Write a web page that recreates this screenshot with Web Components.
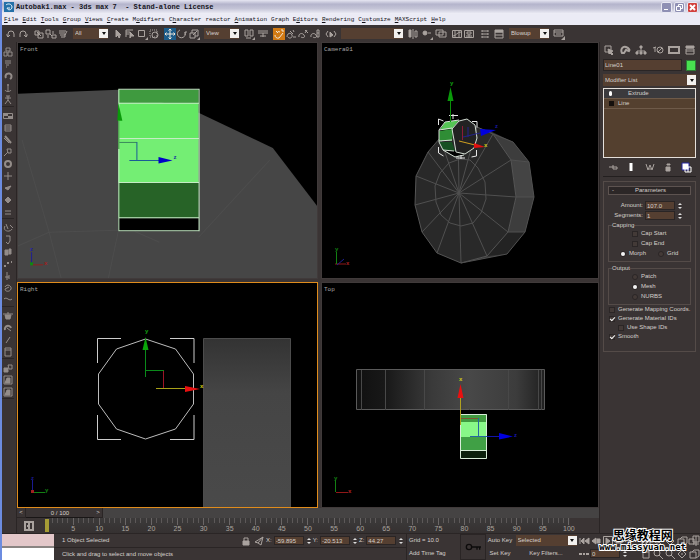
<!DOCTYPE html>
<html lang="en">
<head>
<meta charset="utf-8">
<title>Autobak1.max - 3ds max 7 - Stand-alone License</title>
<style>
  body {
    margin: 0;
    background: #3a3434;
    color: #d6d0cc;
    font: 6px/9px "Liberation Sans", sans-serif;
    --panel: #3a3434;
    --field: #553f31;
    --line: #2a2525;
  }
</style>
</head>
<body>
<max-app>
  <max-viewport label="Front">
    <svg viewBox="19 43 298 235" preserveAspectRatio="xMidYMid slice">
      <path fill="#464646" d="M0 95 18 94 119 90 199 113 273 148 318 207V290H0z"/>
      <path fill="none" stroke="#4d4d4d" d="M23 140 50 232 119 230M50 232 18 246M50 232 62 278M119 231 109 278M199 237 270 160M135 231 160 242"/>
      <path fill="#3f9a3f" d="M119 90h80v13h-80z"/>
      <path fill="#63e863" d="M119 103h80v36h-80z"/>
      <path fill="#74ee74" d="M119 139h80v44h-80z"/>
      <path fill="#276327" d="M119 183h80v35h-80z"/>
      <path d="M119 218h80v13h-80z"/>
      <path fill="none" stroke="#c5ecc5" d="M119.500 89.500h80v141h-80zM120 103.500h79M120 138.500h79M120 182.500h79M120 217.500h79"/>
      <path fill="none" stroke="#3a8a5c" d="M120 142.500h17.500"/>
      <path fill="none" stroke="#1a5c96" d="M137.500 142v18M130 160.500h30"/>
      <path fill="none" stroke="#2e8a2e" d="M119.500 121v28"/>
      <path fill="#0a9a0a" d="m119 103 4 18h-5z"/>
      <path fill="#0000c8" d="m159 157 14 3.500-14 3z"/>
      <text x="174" y="159" fill="#1a35a0">z</text>
      <path fill="none" stroke="#202090" d="M32.500 263V252"/><path fill="none" stroke="#902020" d="M33 264.500h11"/>
      <text x="31" y="251" fill="#2222a0">z</text><text x="45" y="265" fill="#a02020">x</text>
      <path fill="#108810" d="M31 262h3v3h-3z"/>
    </svg>
  </max-viewport>
  <max-viewport label="Camera01">
    <svg viewBox="322 43 276 235" preserveAspectRatio="xMidYMid slice">
      <path fill="#373737" d="M477 127 492 132 513 142 529 162 534 197 525 232 507 254 461 263 487 256 508 232 516 197 511 160z"/>
      <path fill="#444" d="M511 160 529 162 534 197 516 197z"/>
      <path fill="#3d3d3d" d="M493 134 513 142 529 162 511 160zM516 197 534 197 525 232 508 232z"/>
      <path fill="#232323" d="M508 232 525 232 507 254 487 256z"/>
      <path fill="#292929" stroke="#555" d="M440 138 428 152 416 176 415 205 422 232 437 253 461 263 487 256 508 232 516 197 511 160 493 134 477 127 458 126z"/>
      <path fill="none" stroke="#505050" d="M459 193 458 126M459 193 428 152M459 193 416 176M459 193 415 205M459 193 422 232M459 193 437 253M459 193 461 263M459 193 487 256M459 193 508 232M459 193 516 197M459 193 511 160M459 193 493 134M459 193 477 127M459 193 440 138"/>
      <path fill="none" stroke="#505050" d="M460 159 449 163 440 173 435 186 436 202 441 215 450 223 461 226 473 223 481 213 486 199 485 182 478 168 470 160zM511 160 529 162 534 197 525 232 507 254 461 263M493 134 513 142 529 162M516 197h18M508 232h17"/>
      <path fill="#222" d="m452 129 7-8 8-2 8 6 2 13-3 10-9 6-9-2-2-12z"/>
      <path fill="#55c555" d="m440 130 5-8 14-2-7 9z"/>
      <path fill="#2f8d35" d="m439 131 14-2-1 12-13 0z"/>
      <path fill="#175022" d="M439 142h13l3 9-12-1z"/>
      <path d="m443 150 13 1 8 4-10 1z"/>
      <path fill="none" stroke="#d4ded4" d="m452 129 7-8 8-2 8 6 2 13-3 10-9 6-9-2-2-12zM439 130 445 122 459 120M439 130v12l4 8 12 7 9-2M439 130l13-2M439 141l13-1M443 150l11 1"/>
      <path fill="none" stroke="#e6e6e6" d="M438.500 125v-6l5 2M438.500 147v6l5 3M472 121.500h5v6M476.500 150v6l-5 1M449 115.500h9M453 114v5M456 158h9M461 155v4"/>
      <path fill="none" stroke="#0a900a" d="M450.500 122v-22"/>
      <path fill="#0a9a0a" d="m450.500 87 3 14h-6z"/>
      <path fill="none" stroke="#8c1c38" d="M462.500 126v14"/>
      <path fill="none" stroke="#23238a" d="M463 137 480 133M468 127v10"/>
      <path fill="#0000dc" d="m480 129 16 1-15 6z"/>
      <path fill="none" stroke="#d0a020" d="m459 141 16 4"/>
      <path fill="#e01010" d="m474 143 11 4-11 1z"/>
      <text x="450" y="85" fill="#12a012">y</text><text x="484" y="147" fill="#c8c818">x</text><text x="495" y="128" fill="#1818a0">z</text>
      <path fill="none" stroke="#901818" d="M335 264h11"/><path fill="none" stroke="#202090" d="m337 265 7-6"/><path fill="none" stroke="#138013" d="M336.500 264v-12"/>
      <text x="335" y="251" fill="#138013">y</text><text x="346" y="265" fill="#a02020">x</text>
    </svg>
  </max-viewport>
  <max-viewport label="Right" active>
    <svg viewBox="18 283 299 224" preserveAspectRatio="xMidYMid slice">
      <defs><linearGradient id="slab" x2="0" y2="1"><stop stop-color="#333"/><stop offset=".3" stop-color="#454545"/><stop offset="1" stop-color="#4a4a4a"/></linearGradient></defs>
      <path fill="url(#slab)" stroke="#4c4c4c" d="M203.500 338.500h87V520h-87z"/>
      <path fill="none" stroke="#bcbcbc" d="m145.500 339 30 10 18 25v30l-18 25-30 10-29-10-18-25v-30l18-25z"/>
      <path fill="none" stroke="#ccc" d="M121 338.500H97.500V363M170 338.500h24V363M97.500 415v24.500H121M194 415v24.500h-24"/>
      <path fill="none" stroke="#0a8a1a" d="M145.500 350v27M146 370.500h18"/>
      <path fill="#0aa60a" d="m145.500 337 3 13h-6z"/>
      <path fill="none" stroke="#9c1426" d="M163.500 371v18"/>
      <path fill="none" stroke="#a8a018" d="M156 388.500h30"/>
      <path fill="#e81010" d="m185 386 15 3-15 3z"/>
      <text x="145" y="333" fill="#12a012">y</text><text x="200" y="388" fill="#d0d018">x</text>
      <path fill="none" stroke="#1a1a90" d="M32.500 491v-11"/><path fill="none" stroke="#138013" d="M33 492.500h12"/>
      <text x="31" y="480" fill="#1a1a90">z</text><text x="45" y="492" fill="#138013">y</text>
      <path fill="#a02020" d="M31 490h3v3h-3z"/>
    </svg>
  </max-viewport>
  <max-viewport label="Top">
    <svg viewBox="322 283 276 224" preserveAspectRatio="xMidYMid slice">
      <defs><linearGradient id="rim"><stop stop-color="#101010"/><stop offset=".15" stop-color="#181818"/><stop offset=".4" stop-color="#3a3a3a"/><stop offset=".6" stop-color="#484848"/><stop offset=".85" stop-color="#3c3c3c"/><stop offset="1" stop-color="#202020"/></linearGradient></defs>
      <path fill="url(#rim)" stroke="#5a5a5a" d="M356.500 369.500h188v40h-188z"/>
      <path fill="none" stroke="#484848" d="M361.500 370v40M385.500 370v40M424.500 370v40M469.500 370v40M508.500 370v40M538.500 370v40M541.500 370v40"/>
      <path fill="#419b41" d="M460 414h27v8h-27z"/>
      <path fill="#88f888" d="M460 422h27v15h-27z"/>
      <path fill="#40a045" d="M460 437h27v13h-27z"/>
      <path fill="#0c200c" d="M460 450h27v9h-27z"/>
      <path fill="none" stroke="#d8ecd8" d="M460.500 414.500h26v44h-26zM461 450.500h25"/>
      <path fill="none" stroke="#7c5830" d="M461 418.500h17"/>
      <path fill="none" stroke="#2468a0" d="M478.500 418v18M470 436.500h17"/>
      <path fill="none" stroke="#1414a8" d="M487 436.500h14"/>
      <path fill="none" stroke="#b0a020" d="M460.500 397v28"/>
      <path fill="#e81010" d="m460.500 384 3 14h-6z"/>
      <path fill="#0000e0" d="m499 433 14 3.500-14 3z"/>
      <text x="459" y="381" fill="#d0d018">x</text><text x="514" y="437" fill="#1818a8">z</text>
      <path fill="none" stroke="#901818" d="M336 492.500h12"/><path fill="none" stroke="#138013" d="M335.500 492v-12"/>
      <text x="334" y="480" fill="#138013">y</text><text x="348" y="493" fill="#b02020">x</text>
    </svg>
  </max-viewport>
</max-app>

<script>
// icon strokes live on a 12 x 12 grid
const ICONS = {
  undo: '<path d="M3 9V6a3 3 0 0 1 6 0v3M1.500 6.500 3 9l2-2"/>',
  redo: '<path d="M3 9V6a3 3 0 0 1 6 0v3M7 7l2 2 1.500-2.500"/>',
  link: '<path d="M2 3h4v4H2zM5 5h5v5H5zM4 4l4 4"/>',
  unlink: '<path d="M1 2h4v4H1zM7 7h4v3H7zM5 6l2 2M8 3v3M3 7v3"/>',
  bind: '<path d="M2 3h7M2 5h6M3 7h5l2-4M4 9h4V6"/>',
  cursor: '<path fill="currentColor" d="M4 2v7l2-2 1 3 1-1-1-2h2z"/>',
  byname: '<path d="M2 2h7M2 4h4M2 6h3M2 9V2"/><path fill="currentColor" d="M6 4v6l1-2h3z"/>',
  region: '<path d="M2.500 2.500h6v6h-6z"/><path fill="currentColor" stroke="none" d="m12 9v3H9z"/>',
  crossing: '<path stroke-dasharray="1 1" d="M2 2h7v7H2z"/><circle cx="7" cy="7" r="3"/>',
  move: '<path d="M6 1v10M1 6h10M4.500 2.500 6 1l1.500 1.500M4.500 9.500 6 11l1.500-1.500M2.500 4.500 1 6l1.500 1.500M9.500 4.500 11 6 9.500 7.500"/>',
  rotate: '<path d="M4 2a4 4 0 1 0 5 2M9 7V4h2"/>',
  scale: '<path d="M2 5h5v5H2zM4 5V2h6v6H7M5 7l4-4"/><path fill="currentColor" stroke="none" d="m12 9v3H9z"/>',
  pivot: '<path d="M2 2h3v6H2zM7 2h3v6H7zM3 10h5"/><path fill="currentColor" stroke="none" d="m12 9v3H9z"/>',
  manip: '<path d="M1 3h10M1 5h10M6 5v4M3 8h6"/>',
  snap: '<path d="M2 7a3 3 0 0 0 4 3l4-5M4 5a2 2 0 0 1 3-1M8 2h2v2"/><path d="M3 3l2 2"/>',
  angle: '<path d="M2 9c0-4 4-5 5-2s-3 4-4 2M8 2l1 2M8 9h3M5 3l3 3"/>',
  percent: '<path d="M2 9c-1-3 3-5 5-2s-2 3-3 2M8 2l3 3M10 2 8 5"/>',
  spin: '<path d="M2 9c-1-3 3-5 5-2s-2 3-3 2M8 2h2v7H8zM8 5h2"/>',
  named: '<path d="M3 3 1 6l2 3M9 3l2 3-2 3"/><path fill="currentColor" d="M5 4v5l3-2z"/>',
  mirror: '<path fill="currentColor" d="M2 2h2v7H2z"/><path d="M6 1v10M8 3h2v6H8z"/>',
  align: '<circle cx="4" cy="5" r="2" fill="currentColor"/><path d="M7 5h3"/><path fill="currentColor" stroke="none" d="m12 9v3H9z"/>',
  layers: '<path d="M1 2h7v5H1zM4 4h7v5H4z"/>',
  curve: '<path d="M1.500 2.500h9v7h-9zM2 8c3 0 4-4 8-4M4 3v6M8 3v6"/>',
  schematic: '<path d="M1.500 2.500h9v7h-9zM4 4h4v2H4zM6 6v3M3 8h6"/>',
  material: '<path stroke-dasharray="2 1" d="M2 3h8M2 6h8M2 9h8M4 2v8M8 2v8"/>',
  render: '<path fill="currentColor" d="M2 2h8v2H2z"/><path d="M2 4h8v6H2zM2 7h8"/>',
  quick: '<path d="M1 2h9v6H1zM1 4h9M3 6h5"/><path fill="currentColor" stroke="none" d="m12 8v4H8z"/>',
  boxes: '<path d="M4 2h4v3H4zM2 6h3v4H2zM6 6h4v4H6z"/>',
  lines: '<path d="M3 3h6M3 5h6M4 7h3M4 9h1"/>',
  swirl: '<path stroke-width="2" d="M4 8a3 3 0 1 1 4 1"/>',
  anchor: '<path d="M6 2v7M3 8c1 2 5 2 6 0M5 3h2"/>',
  figure: '<path d="M6 2v4L3 10M6 6l3 4M3 4h6M4 2h4"/>',
  checker: '<path fill="currentColor" stroke="none" d="M1 3h5v3H1zM6 6h5v3H6z"/><path d="M1.500 3.500h9v5h-9z"/>',
  drum: '<path d="M3 3h6v6H3zM3 5h6M3 7h6"/>',
  brush: '<path stroke-width="2" d="m3 2 6 7"/><path d="m2 4 5 5"/>',
  hook: '<path d="m2 10 4-4M5 3h4v4H6z"/>',
  ring: '<circle cx="6" cy="6" r="3" stroke-width="2"/>',
  plus: '<path d="M6 2v8M2 6h8"/>',
  flag: '<path fill="currentColor" d="m3 6 6-2-3 4z"/>',
  gem: '<path fill="currentColor" d="m6 3 3 3-3 3-3-3z"/>',
  bars: '<path d="M3 5h6M3 8h6"/>',
  chain: '<path d="M3 4c-3 5 5 7 7 3M8 3l3 3M4 2l2 5"/>',
  hanger: '<path d="M4 2h4v5L6 10 4 8"/>',
  cloth: '<path fill="currentColor" d="M3 4h3v5H3zM7 3h2v5H7z"/>',
  dots: '<path stroke-width="2" d="M2 8h2M5 5h2M9 4h1"/>',
  post: '<path d="M5 2v8M7 5v4M3 7h4"/>',
  loop: '<path d="M3 5c2-4 7-1 6 2S3 10 3 7l4-2"/>',
  wave: '<path d="M2 5c3-3 5 3 8 0"/>',
  pot: '<path fill="currentColor" d="M3 5h6L8 9H4z"/><path d="M1 4h10M5 3h2"/>',
  globe: '<path stroke-width="2" d="M3 8a3 3 0 1 1 6-2"/><path d="m5 6 4 3"/>',
  slash: '<path d="m8 3-4 6"/>',
  panel: '<path d="M3 2h6v8H3zM3 4h6"/>',
  pair: '<path fill="currentColor" d="M2 6h4v4H2z"/><path d="M6 3h4v4H7z"/>',
  tile: '<path d="M2 2h8v8H2z"/><path fill="currentColor" d="M5 4h3v5H3z"/>',
  create: '<path d="M2 2h6v6H2z"/><path fill="currentColor" d="m5 5 5 2-2 1 2 2-1 1-2-2-1 1z"/>',
  modify: '<path stroke-width="2" d="M3 9C1 5 4 2 7 3s4 3 3 4L7 6 5 9z"/>',
  tree: '<path d="M6 3v4M2 9V7h8v2M6 7v2"/><path fill="currentColor" d="M5 2h2v2H5zM1 8h2v2H1zM5 8h2v2H5zM9 8h2v2H9z"/>',
  motion: '<circle cx="8" cy="6" r="3"/><path d="M6 8l4-4M1 4l3-1M3 3v5"/>',
  display: '<path stroke-width="2" d="M1 3h10v6H1z"/>',
  hammer: '<path fill="currentColor" d="M2 2h8v2H2z"/><path d="M2 5h8v5H2zM2 7h8"/>',
  pin: '<path d="M2 6h4M6 4v4h4V6H6"/>',
  result: '<path stroke-width="3" stroke="#fff" d="M6 2v8"/>',
  unique: '<path stroke-width="1" d="m2 3 2 6 2-5 2 5 2-6M5 8h2"/>',
  trash: '<path fill="currentColor" d="M4 6h4v4H4zM5 3h3v1H5z"/>',
  sets: '<path fill="#fff" stroke="#2525a0" d="M2 2h7v7H2z"/><path stroke="#fff" d="M5 6h6v5H5zM8 6v5"/>',
  trackbar: '<path stroke-width="2" d="M2 2h8v8H2zM6 2v8M4 6h2"/>',
  lock: '<path fill="currentColor" d="M3 6h6v4H3z"/><path d="M4 6V3h4v3"/>',
  plane: '<path d="m2 7 8-5-2 8-3-2zM5 8l5-6"/>',
  first: '<path d="M2 3v6"/><path fill="currentColor" d="M6 3v6L3 6zM11 3v6L7 6z"/>',
  prev: '<path fill="currentColor" d="M6 3v6L2 6zM7 4h3v4H7z"/>',
  play: '<path d="M1.500 1.500h9v9h-9z"/><path fill="currentColor" d="m4 3 4 3-4 3z"/>',
  next: '<path fill="currentColor" d="m6 3 4 3-4 3zM2 4h3v4H2z"/>',
  last: '<path d="M10 3v6"/><path fill="currentColor" d="m2 3 3 3-3 3zM6 3l3 3-3 3z"/>',
  keymode: '<path stroke-width="2" d="M1 6h3M5 6h2M8 6h3"/>',
  zoom: '<circle cx="5" cy="5" r="3"/><path d="m7 7 4 4"/>',
  cube: '<path d="M2 4h6v6H2zM4 4l2-2h5v6L8 10"/>',
  four: '<path d="M1 4h5v5H1zM5 1h6v6H5zM8 1v10M5 9h6"/>',
  orbit: '<path d="m6 2 4 4-4 4-4-4z"/><path d="M6 5v2"/>',
  key: '<circle cx="3" cy="6" r="2"/><path d="M5 6h7M9 6v2M11 6v2"/>',
};

// shared base: every part sets its markup into an open root
class Part extends HTMLElement {
  constructor() {
    super();
    this.attachShadow({ mode: "open" });
  }
  connectedCallback() {
    this.shadowRoot.innerHTML = this.template();
  }
}

class MaxIcon extends Part {
  template() {
    return `<style>
      :host { display: block; width: 12px; height: 12px; flex: none; color: #aaa39f; }
      svg { display: block; width: 100%; height: 100%; fill: none; stroke: currentColor; }
    </style><svg viewBox="0 0 12 12" aria-hidden="true">${ICONS[this.getAttribute("name")]}</svg>`;
  }
}

class MaxTool extends Part {
  template() {
    const label = this.getAttribute("name");
    return `<style>
      :host { display: block; flex: none; }
      button { display: block; border: 0; padding: 0; background: none; }
      :host([tone="blue"]) button { background: #1b5c8a; }
      :host([tone="orange"]) button { background: #d27a14; }
      :host([tone]) max-icon { color: #efe6da; }
    </style><button type="button" aria-label="${label}"><max-icon name="${label}"></max-icon></button>`;
  }
}

class MaxSelect extends Part {
  template() {
    return `<style>
      :host { display: flex; height: 11px; background: var(--field); flex: none; }
      select { flex: 1; min-width: 0; appearance: none; border: 0; border-radius: 0; padding: 0 2px; margin: 0; background: none; color: inherit; font: inherit; }
      i { flex: none; width: 9px; margin: 1px 0; background: #f2f0ee; display: grid; place-items: center; pointer-events: none; }
      i::after { content: ""; border: 2px solid transparent; border-top: 3px solid #111; border-bottom: 0; }
    </style><select aria-label="${this.getAttribute("label")}"><option>${this.getAttribute("value")}</option></select><i></i>`;
  }
}

class MaxSpinner extends Part {
  template() {
    const label = this.getAttribute("label");
    return `<style>
      :host { display: block; }
      label { display: flex; align-items: center; justify-content: flex-end; gap: 2px; }
      input { width: 30px; height: 9px; box-sizing: border-box; padding: 0 1px; border: 1px solid var(--line); background: var(--field); color: inherit; font: inherit; line-height: 7px; }
      i { display: grid; gap: 2px; width: 6px; justify-items: center; }
      i::before, i::after { content: ""; border: 2px solid transparent; }
      i::before { border-bottom-color: #ddd; border-top: 0; }
      i::after { border-top-color: #ddd; border-bottom: 0; }
    </style><label>${label}<input ${label ? "" : 'aria-label="Frame"'} value="${this.getAttribute("value")}"><i></i></label>`;
  }
}

class MaxOption extends Part {
  template() {
    const type = this.getAttribute("type");
    return `<style>
      :host { display: block; white-space: nowrap; }
      label { display: flex; align-items: center; gap: 3px; height: 9px; }
      input { appearance: none; flex: none; margin: 0; width: 6px; height: 6px; box-sizing: border-box; border: 1px solid #2b2626; background: #433a37; display: grid; place-items: center; }
      input[type=radio] { border-radius: 3px; }
      input[type=radio]:checked::after { content: ""; width: 4px; height: 4px; border-radius: 2px; background: #f4f4f4; }
      input[type=checkbox]:checked::after { content: ""; width: 4px; height: 2px; border: solid #f4f4f4; border-width: 0 0 1px 1px; transform: rotate(-45deg); }
    </style><label><input type="${type}" ${this.hasAttribute("checked") ? "checked" : ""}><slot></slot></label>`;
  }
}

class MaxTitlebar extends Part {
  template() {
    return `<style>
      :host { display: flex; align-items: center; height: 14px; padding: 0 2px; gap: 2px; background: linear-gradient(#e6e6f2, #b4b4cc 30%, #c3c3d6 60%, #f0f0f8); color: #14141c; font: bold 7px/12px "Liberation Mono", monospace; }
      svg { width: 10px; height: 10px; }
      h1 { margin: 0; flex: 1; font: inherit; white-space: pre; }
      div { display: flex; gap: 2px; }
      button { width: 11px; height: 11px; padding: 0; border: 1px solid #e8e8f2; border-radius: 2px; background: #8f90b4; }
      button svg { display: block; width: 9px; height: 9px; fill: none; stroke: #fff; }
      button.close { background: #d2403c; }
    </style>
    <svg viewBox="0 0 10 10"><path fill="#2470a8" d="M0 0h10v10H0z"/><path fill="none" stroke="#e8f4fa" d="M2 3c2-2 6-1 6 2S4 9 3 6h3"/></svg>
    <h1>Autobak1.max - 3ds max 7  - Stand-alone License</h1>
    <div>
      <button aria-label="Minimize"><svg viewBox="0 0 9 9"><path d="M2 6.500h4"/></svg></button>
      <button aria-label="Restore"><svg viewBox="0 0 9 9"><path d="M1.500 3.500h4v4h-4zM3.500 3V1.500h4v4H6"/></svg></button>
      <button class="close" aria-label="Close"><svg viewBox="0 0 9 9"><path stroke-width="2" d="m2 2 5 5M7 2 2 7"/></svg></button>
    </div>`;
  }
}

class MaxMenubar extends Part {
  template() {
    // an ampersand marks the letter to underline
    const items = ["&File", "&Edit", "&Tools", "&Group", "&Views", "&Create", "M&odifiers", "C&haracter", "reactor", "&Animation", "Graph E&ditors", "&Rendering", "C&ustomize", "&MAXScript", "&Help"];
    return `<style>
      :host { display: flex; align-items: center; gap: 4px; height: 11px; padding: 0 2px; background: #ebebf5; font: 6px/10px "Liberation Mono", monospace; }
      a { color: #101018; text-decoration: none; white-space: pre; }
    </style>${items.map(t => `<a href="#">${t.replace(/&(.)/, "<u>$1</u>")}</a>`).join("")}`;
  }
}

class MaxToolbar extends Part {
  template() {
    const tools = names => names.split(" ").map(n => `<max-tool name="${n}"></max-tool>`).join("");
    return `<style>
      :host { display: flex; align-items: center; height: 17px; padding: 0 3px; gap: 4px; background: var(--panel); }
      div { display: flex; }
      .wide { gap: 2px; }
      .short { width: 35px; }
      .long { width: 62px; }
      .render { width: 40px; }
    </style>
    <div>${tools("undo redo")}</div>
    <div>${tools("link unlink bind")}</div>
    <max-select class="short" label="Selection filter" value="All"></max-select>
    <div>${tools("cursor byname region crossing")}</div>
    <div><max-tool name="move" tone="blue"></max-tool>${tools("rotate scale")}</div>
    <max-select class="short" label="Coordinate system" value="View"></max-select>
    <div class="wide">${tools("pivot manip")}</div>
    <div><max-tool name="snap" tone="orange"></max-tool>${tools("angle percent spin")}</div>
    <div>${tools("named")}</div>
    <max-select class="long" label="Named selection" value=""></max-select>
    <div class="wide">${tools("mirror align layers")}</div>
    <div>${tools("curve schematic")}</div>
    <div class="wide">${tools("material render")}</div>
    <max-select class="render" label="Render type" value="Blowup"></max-select>
    <div>${tools("quick")}</div>`;
  }
}

class MaxSidebar extends Part {
  template() {
    const groups = [
      "boxes lines swirl anchor figure",
      "checker drum brush hook ring plus flag gem bars",
      "chain hanger cloth dots post loop wave",
      "pot globe slash panel",
      "pair tile tile",
    ];
    return `<style>
      :host { display: flex; flex-direction: column; align-items: center; gap: 3px; padding: 4px 2px 0 0; border-right: 1px solid var(--line); }
      div { border-bottom: 1px solid var(--line); }
      max-tool { opacity: .8; }
    </style>${groups.map(g => `<div>${g.split(" ").map(n => `<max-tool name="${n}"></max-tool>`).join("")}</div>`).join("")}`;
  }
}

class MaxViewport extends Part {
  template() {
    return `<style>
      :host { display: grid; grid: minmax(0, 1fr) / minmax(0, 1fr); contain: size; min-height: 160px; overflow: hidden; border: 1px solid #403a3a; background: #000; }
      :host([active]) { border-color: #e08c1c; }
      span { grid-area: 1 / 1; padding: 3px 2px; z-index: 1; color: #a8a8a8; font: 6px/7px "Liberation Mono", monospace; }
      ::slotted(svg) { grid-area: 1 / 1; width: 100%; height: 100%; font: bold 6px "Liberation Sans", sans-serif; }
    </style><span>${this.getAttribute("label")}</span><slot></slot>`;
  }
}

class MaxTimeline extends Part {
  template() {
    let ticks = "";
    for (let f = 0; f <= 100; f++) {
      ticks += `<i class="${f % 5 ? "" : "major"}">${f % 5 || !f ? "" : `<b>${f}</b>`}</i>`;
    }
    return `<style>
      :host { display: block; }
      .slider { display: flex; height: 10px; background: #454343; }
      .slider div { display: flex; width: 86px; background: var(--panel); }
      button { border: 1px solid var(--line); border-width: 0 1px 1px 0; padding: 0; width: 9px; background: none; color: inherit; font: inherit; }
      output { flex: 1; text-align: center; line-height: 10px; border-bottom: 1px solid #191616; }
      .track { display: flex; align-items: center; height: 15px; padding: 0 29px 0 6px; }
      .track max-tool { margin-right: 12px; }
      .ticks { flex: 1; align-self: stretch; display: flex; justify-content: space-between; background: linear-gradient(#3c3a3a, #353131); }
      .ticks i { display: flex; flex-direction: column; align-items: center; width: 0; font-style: normal; }
      .ticks i::before { content: ""; width: 1px; height: 5px; flex: none; background: #5c5858; }
      .ticks i.major::before { height: 7px; background: #6a6666; }
      .ticks i:first-child::before { width: 4px; height: 13px; margin-top: 1px; background: #a69c35; }
      b { font-weight: normal; font-size: 7px; line-height: 7px; color: #aaa49f; }
    </style>
    <div class="slider"><div><button aria-label="Previous frame">&lt;</button><output>0 / 100</output><button aria-label="Next frame">&gt;</button></div></div>
    <div class="track"><max-tool name="trackbar"></max-tool><div class="ticks">${ticks}</div></div>`;
  }
}

class MaxRollout extends Part {
  template() {
    return `<style>
      :host { display: block; padding: 4px; border: 1px solid #544b48; }
      button { display: flex; width: 100%; height: 9px; padding: 0 3px; border: 1px solid #5d5350; background: #2c2727; color: inherit; font: inherit; line-height: 7px; }
      b { flex: 1; font-weight: normal; text-align: center; }
    </style><button type="button"><span>-</span><b>${this.getAttribute("heading")}</b></button><slot></slot>`;
  }
}

class MaxCommandPanel extends Part {
  template() {
    return `<style>
      :host { display: block; padding: 1px 4px 0 3px; border-left: 1px solid var(--line); }
      nav, .row, .stack-tools { display: flex; align-items: center; justify-content: space-between; }
      nav { height: 14px; }
      .row { margin: 2px 0 3px; gap: 4px; }
      .row input { flex: 1; min-width: 0; height: 12px; box-sizing: border-box; border: 1px solid var(--line); padding: 0 1px; background: var(--field); color: inherit; font: inherit; }
      .swatch { width: 10px; height: 11px; padding: 0; border: 1px solid #2c7a34; background: #48e050; }
      max-select { height: 12px; }
      .stack { list-style: none; margin: 2px 0 0; padding: 0; height: 68px; border: 1px solid #e4dfda; background: #54402f; }
      .stack li { display: flex; align-items: center; height: 9px; padding: 0 5px; gap: 4px; border-bottom: 1px solid #6e5a49; }
      .stack .on { background: #3b3a3d; }
      .on span { padding-left: 12px; }
      .bulb { width: 3px; height: 5px; border-radius: 2px; background: #fff; }
      .plus { width: 5px; height: 5px; background: #15100d; }
      .stack-tools { height: 18px; padding: 0 4px; border-bottom: 1px solid #231f1f; margin-bottom: 4px; }
      .params { display: grid; gap: 1px; padding: 6px 8px 1px 0; }
      fieldset { display: grid; gap: 1px; margin: 0; padding: 0 3px 3px; border: 1px solid #544b48; min-width: 0; }
      legend { padding: 0; line-height: 8px; }
      .capping { margin: 0 0 2px; }
      .indent { padding-left: 20px; }
      .pair { display: flex; gap: 12px; padding-left: 8px; }
      .checks { padding: 0 0 6px 1px; }
      .sub { padding-left: 9px; }
    </style>
    <nav>${"create modify tree motion display hammer".split(" ").map(n => `<max-tool name="${n}"></max-tool>`).join("")}</nav>
    <div class="row"><input aria-label="Object name" value="Line01"><button class="swatch" aria-label="Object color"></button></div>
    <max-select label="Modifier" value="Modifier List"></max-select>
    <ul class="stack"><li class="on"><i class="bulb"></i><span>Extrude</span></li><li><i class="plus"></i>Line</li></ul>
    <div class="stack-tools">${"pin result unique trash sets".split(" ").map(n => `<max-tool name="${n}"></max-tool>`).join("")}</div>
    <max-rollout heading="Parameters">
      <div class="params"><max-spinner label="Amount:" value="107.0"></max-spinner><max-spinner label="Segments:" value="1"></max-spinner></div>
      <fieldset class="capping"><legend>Capping</legend>
        <max-option class="indent" type="checkbox">Cap Start</max-option>
        <max-option class="indent" type="checkbox">Cap End</max-option>
        <div class="pair"><max-option type="radio" checked>Morph</max-option><max-option type="radio">Grid</max-option></div>
      </fieldset>
      <fieldset><legend>Output</legend>
        <max-option class="indent" type="radio">Patch</max-option>
        <max-option class="indent" type="radio" checked>Mesh</max-option>
        <max-option class="indent" type="radio">NURBS</max-option>
      </fieldset>
      <div class="checks">
        <max-option type="checkbox">Generate Mapping Coords.</max-option>
        <max-option type="checkbox" checked>Generate Material IDs</max-option>
        <max-option class="sub" type="checkbox">Use Shape IDs</max-option>
        <max-option type="checkbox" checked>Smooth</max-option>
      </div>
    </max-rollout>`;
  }
}

class MaxStatus extends Part {
  template() {
    const tools = names => names.split(" ").map(n => `<max-tool name="${n}"></max-tool>`).join("");
    return `<style>
      :host { display: block; border-top: 1px solid var(--line); }
      .bar { display: grid; grid-template-columns: 52px minmax(0, 1fr) 166px 54px 26px 28px 64px 54px 68px; grid-template-rows: 13px 13px; }
      .bar > * { display: flex; align-items: center; min-width: 0; white-space: nowrap; }
      .bar > .script { grid-row: 1 / 3; display: grid; grid-template-rows: 1fr 1fr; align-items: stretch; gap: 2px; background: #8a8482; }
      .script input { min-width: 0; min-height: 0; padding: 0; border: 0; background: #fff; }
      .script .listener { background: #e3c7c9; }
      .message { padding-left: 8px; }
      .prompt { grid-area: 2 / 2 / 3 / 4; padding-left: 8px; border-top: 1px solid var(--line); box-sizing: border-box; }
      .coords { gap: 1px; }
      .grid, .tag { padding-left: 2px; border-left: 1px solid var(--line); }
      .tag { grid-area: 2 / 4; }
      .big { grid-area: 1 / 5 / 3 / 6; justify-content: center; border: 1px solid var(--line); background: none; padding: 0; }
      .big max-icon { width: 16px; height: 16px; color: #0d0b0b; }
      .key { padding: 0; border: 0; background: none; color: inherit; font: inherit; justify-content: center; }
      .set { grid-area: 2 / 6; }
      .filters { grid-area: 2 / 7; }
      max-select { width: 61px; margin: auto; }
      .frame { grid-area: 2 / 8; }
      .nav { justify-content: flex-end; }
      .nav2 { grid-area: 2 / 9; }
    </style>
    <div class="bar">
      <div class="script"><input class="listener" aria-label="Macro recorder"><input aria-label="Listener"></div>
      <div class="message">1 Object Selected</div>
      <div class="coords">${tools("lock plane")}
        <max-spinner label="X:" value="-59.895"></max-spinner><max-spinner label="Y:" value="-20.513"></max-spinner><max-spinner label="Z:" value="44.27"></max-spinner></div>
      <div class="grid">Grid = 10.0</div>
      <button class="big" aria-label="Set keys"><max-icon name="key"></max-icon></button>
      <button class="key">Auto Key</button>
      <div><max-select label="Key target" value="Selected"></max-select></div>
      <div>${tools("first prev play next")}</div>
      <div class="nav">${tools("last zoom orbit cube four")}</div>
      <div class="prompt">Click and drag to select and move objects</div>
      <div class="tag">Add Time Tag</div>
      <button class="key set">Set Key</button>
      <button class="key filters">Key Filters...</button>
      <div class="frame">${tools("keymode")}<max-spinner label="" value="0"></max-spinner></div>
      <div class="nav nav2">${tools("panel zoom zoom orbit cube")}</div>
    </div>`;
  }
}

class MaxWatermark extends Part {
  template() {
    return `<style>
      :host { position: absolute; right: 14px; bottom: 7px; display: block; text-align: center; color: #000; -webkit-text-stroke: 2px #fff; paint-order: stroke fill; }
      p { margin: 0; font: bold 12px/15px "Noto Sans CJK SC", sans-serif; }
      p + p { font: bold 9px/11px "DejaVu Sans Mono", monospace; }
    </style><p lang="zh">思缘教程网</p><p>www.missyuan.net</p>`;
  }
}

class MaxApp extends Part {
  template() {
    return `<style>
      :host { display: grid; grid-template-rows: auto auto auto 1fr auto; min-height: 100vh; position: relative; box-sizing: border-box; border-left: 2px solid #6c8ce0; }
      main { display: grid; grid-template-columns: 15px minmax(0, 1fr) 101px; }
      .work { display: grid; grid-template-rows: 1fr auto; }
      .views { display: grid; grid-template-columns: 301fr 278fr; grid-template-rows: 237fr 226fr; gap: 3px; }
    </style>
    <max-titlebar></max-titlebar>
    <max-menubar></max-menubar>
    <max-toolbar></max-toolbar>
    <main>
      <max-sidebar></max-sidebar>
      <div class="work"><div class="views"><slot></slot></div><max-timeline></max-timeline></div>
      <max-command-panel></max-command-panel>
    </main>
    <max-status></max-status>
    <max-watermark></max-watermark>`;
  }
}

customElements.define("max-icon", MaxIcon);
customElements.define("max-tool", MaxTool);
customElements.define("max-select", MaxSelect);
customElements.define("max-spinner", MaxSpinner);
customElements.define("max-option", MaxOption);
customElements.define("max-titlebar", MaxTitlebar);
customElements.define("max-menubar", MaxMenubar);
customElements.define("max-toolbar", MaxToolbar);
customElements.define("max-sidebar", MaxSidebar);
customElements.define("max-viewport", MaxViewport);
customElements.define("max-timeline", MaxTimeline);
customElements.define("max-rollout", MaxRollout);
customElements.define("max-command-panel", MaxCommandPanel);
customElements.define("max-status", MaxStatus);
customElements.define("max-watermark", MaxWatermark);
customElements.define("max-app", MaxApp);
</script>
</body>
</html>
